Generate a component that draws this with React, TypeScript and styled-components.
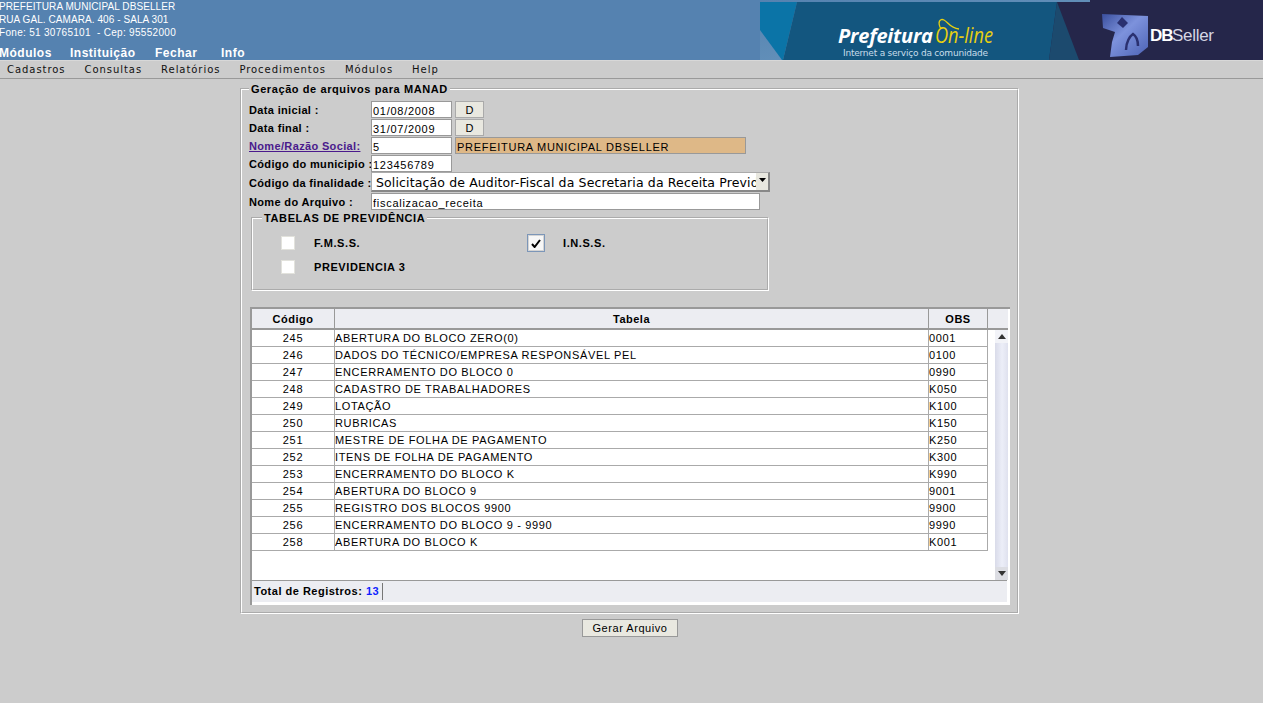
import React from "react";
import styled, { createGlobalStyle } from "styled-components";

const Global = createGlobalStyle`
  html, body { margin: 0; padding: 0; height: 100%; background: #cccccc; overflow: hidden; }
  body { font-family: "Liberation Sans", Arial, sans-serif; font-size: 11px; color: #000; }
  * { box-sizing: border-box; }
`;

const Page = styled.div`height: 703px; display: flex; flex-direction: column;`;
const Header = styled.header`
  height: 60px; background: #5582b0; display: flex; justify-content: space-between; overflow: hidden;
`;
const HeaderLeft = styled.div`
  display: flex; flex-direction: column; margin-left: -1px; color: #fff;
`;
const InfoLine = styled.div<{ $ls: number }>`
  height: 13px; line-height: 13px; font-size: 10px; letter-spacing: ${p => p.$ls}px; white-space: pre;
`;
const InfoBlock = styled.div`display: flex; flex-direction: column;`;
const TopNav = styled.nav`
  display: flex; margin-top: 8px; font-size: 12px; font-weight: bold; line-height: 13px; letter-spacing: 0.5px;
`;
const TopNavItem = styled.span<{ $w: number }>`width: ${p => p.$w}px;`;
const Banner = styled.svg`display: block; width: 503px; height: 60px; flex: none;`;

const Menu = styled.nav`
  height: 19px; background: #cccccc; border-bottom: 1px solid #999; border-top: 1px solid #d8d8d8; display: flex; padding-left: 7px;
  font-family: "DejaVu Sans", sans-serif; font-size: 10px; line-height: 17px; letter-spacing: 0.95px; color: #111;
`;
const MenuItem = styled.span`margin-right: 19px;`;

const Main = styled.main`
  display: flex; flex-direction: column; width: 779px; margin-left: 240px; padding-top: 4px;
`;
const Field = styled.fieldset`
  margin: 0; padding: 7px 7px 7px 7px; border: 2px groove #fff; min-width: 0; display: flex; flex-direction: column;
`;
const Legend = styled.legend`
  padding: 0 2px; height: 11px; line-height: 13px; font-weight: bold; font-size: 11px; letter-spacing: 0.59px;
`;
const FormGrid = styled.div`display: flex; flex-direction: column;`;
const FormRow = styled.div<{ $h: number }>`
  height: ${p => p.$h}px; display: flex; align-items: flex-start;
`;
const Label = styled.label`
  width: 122px; flex: none; font-weight: bold; font-size: 11px; line-height: 18px; letter-spacing: 0.35px; white-space: nowrap;
`;
const LinkLabel = styled(Label)`
  color: #4a1a8c; text-decoration: underline;
`;
const SelectLabel = styled(Label)`line-height: 22px;`;
const Input = styled.input<{ $w: number; $bg?: string }>`
  width: ${p => p.$w}px; height: 17px; padding: 2px 1px 0; border: 1px solid #999; background: ${p => p.$bg ?? "#fff"};
  font-family: "Liberation Sans", sans-serif; font-size: 11px; letter-spacing: 0.72px; color: #000; outline: none; border-radius: 0;
`;
const DateInput = styled(Input)`margin-right: 3px;`;
const SmallButton = styled.button`
  width: 29px; height: 17px; padding: 0; background: #e9e8e0; border: 1px solid #aaa; font-family: "Liberation Sans", sans-serif;
  font-size: 11px; color: #000; border-radius: 0;
`;
const SelectBox = styled.div`
  width: 399px; height: 20px; display: flex; background: #fff; border: 1px solid #aaa; border-right: 2px solid #888; border-bottom: 2px solid #888;
  overflow: hidden;
`;
const SelectText = styled.div`
  flex: 1; min-width: 0; overflow: hidden; white-space: nowrap; padding-left: 4px; line-height: 19px;
  font-family: "DejaVu Sans", sans-serif; font-size: 12.5px; letter-spacing: 0.13px;
`;
const SelectArrow = styled.div`
  width: 12px; flex: none; background: #e8e7df; display: flex; align-items: center; justify-content: center; padding-bottom: 3px;
`;
const InnerField = styled.fieldset`
  margin: 2px 0 0 2px; padding: 0; width: 518px; height: 79px; border: 2px groove #fff; min-width: 0;
`;
const InnerLegend = styled.legend`
  margin-left: 9px; padding: 0 2px; height: 11px; line-height: 13px; font-weight: bold; font-size: 11px; letter-spacing: 0.62px;
`;
const ChecksGrid = styled.div`
  display: grid; grid-template-columns: 249px 1fr; grid-auto-rows: 24px; padding: 8px 0 0 28px;
`;
const CheckCell = styled.div`display: flex; align-items: center;`;
const CheckSlot = styled.div`width: 33px; flex: none; display: flex; align-items: center;`;
const CheckBox = styled.span`
  width: 14px; height: 14px; display: block; background: #fff; border: 1px solid #e2e2dc;
`;
const CheckedBox = styled.span`
  width: 18px; height: 18px; display: flex; align-items: center; justify-content: center; margin-left: -3px; flex: none; background: #f7f7f7;
  border: 1px solid #7c96b8; box-shadow: inset 0 0 0 1px #d4d4d4;
`;
const CheckLabel = styled.span`font-weight: bold; font-size: 11px; letter-spacing: 0.58px;`;

const TableBox = styled.section`
  margin: 16px 0 0 1px; width: 760px; height: 298px; background: #fff; border-top: 2px solid #999; border-left: 2px solid #999;
  padding: 0 2px 3px 0; display: flex; flex-direction: column;
`;
const HeadRow = styled.div`
  height: 21px; flex: none; display: grid; grid-template-columns: 83px 594px 59px 1fr; background: #ecedf2; border-bottom: 2px solid #999;
`;
const HeadCell = styled.div`
  font-weight: bold; font-size: 11px; text-align: center; line-height: 20px; letter-spacing: 0.5px; border-right: 1px solid #999;
  &:last-child { border-right: 0; }
`;
const TableMiddle = styled.div`flex: 1; min-height: 0; display: flex; background: #fff;`;
const RowsArea = styled.div`width: 736px; flex: none; display: flex; flex-direction: column;`;
const DataRow = styled.div`
  height: 17px; flex: none; display: grid; grid-template-columns: 83px 594px 59px; border-bottom: 1px solid #aaa;
  font-size: 11px; line-height: 16px; letter-spacing: 0.65px;
`;
const CodeCell = styled.div`text-align: center; border-right: 1px solid #aaa;`;
const TextCell = styled.div`border-right: 1px solid #aaa; white-space: nowrap; overflow: hidden;`;
const Scrollbar = styled.div`
  width: 13px; margin-left: 7px; flex: none; display: flex; flex-direction: column; background: linear-gradient(90deg, #d9dbe9, #eceef8 55%, #dfe1ee);
`;
const ScrollButton = styled.div<{ $bg: string }>`
  height: 13px; flex: none; background: ${p => p.$bg}; display: flex; align-items: center; justify-content: center;
`;
const ScrollTrack = styled.div`flex: 1;`;
const TableFoot = styled.footer`
  height: 22px; flex: none; background: #ecedf2; border-top: 1px solid #999; margin-right: 1px; display: flex; align-items: center; padding-left: 2px;
  font-weight: bold; font-size: 11px; letter-spacing: 0.5px;
`;
const Total = styled.span`
  height: 17px; line-height: 17px; padding-right: 3px; border-right: 1px solid #777; white-space: pre;
`;
const Count = styled.span`color: #0f1eff;`;
const GenerateRow = styled.div`display: flex; justify-content: center; margin-top: 5px; padding-left: 1px;`;
const GenerateButton = styled.button`
  width: 96px; height: 18px; padding: 0; background: #e9e8e0; border: 1px solid #999; font-family: "Liberation Sans", sans-serif;
  font-size: 11px; letter-spacing: 0.55px; color: #000; border-radius: 0;
`;

const rows: [string, string, string][] = [
  ["245", "ABERTURA DO BLOCO ZERO(0)", "0001"],
  ["246", "DADOS DO TÉCNICO/EMPRESA RESPONSÁVEL PEL", "0100"],
  ["247", "ENCERRAMENTO DO BLOCO 0", "0990"],
  ["248", "CADASTRO DE TRABALHADORES", "K050"],
  ["249", "LOTAÇÃO", "K100"],
  ["250", "RUBRICAS", "K150"],
  ["251", "MESTRE DE FOLHA DE PAGAMENTO", "K250"],
  ["252", "ITENS DE FOLHA DE PAGAMENTO", "K300"],
  ["253", "ENCERRAMENTO DO BLOCO K", "K990"],
  ["254", "ABERTURA DO BLOCO 9", "9001"],
  ["255", "REGISTRO DOS BLOCOS 9900", "9900"],
  ["256", "ENCERRAMENTO DO BLOCO 9 - 9990", "9990"],
  ["258", "ABERTURA DO BLOCO K", "K001"],
];

const BannerArt = () => (
  <Banner viewBox="0 0 503 60">
    <defs>
      <linearGradient id="lg" x1="0" x2="1" y1="0" y2="1">
        <stop offset="0" stopColor="#3a4f9e" />
        <stop offset="0.45" stopColor="#7d92dc" />
        <stop offset="1" stopColor="#4c62b5" />
      </linearGradient>
      <linearGradient id="edge" x1="0" x2="1" y1="0" y2="1">
        <stop offset="0" stopColor="#5582b0" />
        <stop offset="1" stopColor="#6c9ac0" />
      </linearGradient>
    </defs>
    <rect x="0" y="0" width="330" height="60" fill="url(#edge)" />
    <rect x="280" y="2" width="223" height="58" fill="#25264a" />
    <rect x="330" y="0" width="173" height="2" fill="#25264a" />
    <polygon points="0,2 37,2 23,60 22,60 0,30" fill="#0b74a7" />
    <polygon points="37,2 297,2 289,60 23,60" fill="#13567f" />
    <polygon points="297,2 289,60 319,60" fill="#1c4a6e" />
    <text x="78" y="43" fontFamily="'Open Sans', 'Liberation Sans', sans-serif" fontSize="20" fontWeight="bold" fontStyle="italic" fill="#fff" textLength="95">Prefeitura</text>
    <text x="175" y="43" fontFamily="'Open Sans', 'Liberation Sans', sans-serif" fontSize="21" fontStyle="italic" fill="#e8cf10" textLength="58" lengthAdjust="spacingAndGlyphs">On-line</text>
    <path d="M181 29C177 22 180 18 184 20C188 22 190 28 199 29" fill="none" stroke="#e8cf10" strokeWidth="1.3" />
    <text x="83" y="56" fontFamily="'DejaVu Sans', sans-serif" fontSize="9" fill="#c8dcea" textLength="145">Internet a serviço da comunidade</text>
    <path d="M342 14L388 16L388 47L378 55L350 57L352 42L355 32L343 28Z" fill="url(#lg)" />
    <path d="M362 17L368 23L363 28L357 23Z" fill="#2a3070" />
    <path d="M366 50C366 42 370 36 373 34C376 36 378 40 378 46" fill="none" stroke="#2a3070" strokeWidth="2.5" />
    <text x="390" y="41" fontFamily="'Liberation Sans', sans-serif" fontSize="17" fontWeight="bold" fill="#fff" letterSpacing="-1">DB</text>
    <text x="412" y="41" fontFamily="'Liberation Sans', sans-serif" fontSize="17" fill="#d5d6e4" letterSpacing="-0.3">Seller</text>
  </Banner>
);

export default function App() {
  return (
    <Page>
      <Global />
      <Header>
        <HeaderLeft>
          <InfoBlock>
            <InfoLine $ls={0.08}>PREFEITURA MUNICIPAL DBSELLER</InfoLine>
            <InfoLine $ls={0.07}>RUA GAL. CAMARA. 406 - SALA 301</InfoLine>
            <InfoLine $ls={0.3}>Fone: 51 30765101  - Cep: 95552000</InfoLine>
          </InfoBlock>
          <TopNav>
            <TopNavItem $w={71}>Módulos</TopNavItem>
            <TopNavItem $w={85}>Instituição</TopNavItem>
            <TopNavItem $w={66}>Fechar</TopNavItem>
            <TopNavItem $w={40}>Info</TopNavItem>
          </TopNav>
        </HeaderLeft>
        <BannerArt />
      </Header>
      <Menu>
        {["Cadastros", "Consultas", "Relatórios", "Procedimentos", "Módulos", "Help"].map(m => (
          <MenuItem key={m}>{m}</MenuItem>
        ))}
      </Menu>
      <Main>
        <Field>
          <Legend>Geração de arquivos para MANAD</Legend>
          <FormGrid>
            <FormRow $h={18}>
              <Label>Data inicial :</Label>
              <DateInput $w={81} readOnly value="01/08/2008" />
              <SmallButton>D</SmallButton>
            </FormRow>
            <FormRow $h={18}>
              <Label>Data final :</Label>
              <DateInput $w={81} readOnly value="31/07/2009" />
              <SmallButton>D</SmallButton>
            </FormRow>
            <FormRow $h={18}>
              <LinkLabel>Nome/Razão Social:</LinkLabel>
              <DateInput $w={81} readOnly value="5" />
              <Input $w={291} $bg="#deb887" readOnly value="PREFEITURA MUNICIPAL DBSELLER" />
            </FormRow>
            <FormRow $h={17}>
              <Label>Código do municipio :</Label>
              <Input $w={81} readOnly value="123456789" />
            </FormRow>
            <FormRow $h={21}>
              <SelectLabel>Código da finalidade :</SelectLabel>
              <SelectBox>
                <SelectText>Solicitação de Auditor-Fiscal da Secretaria da Receita Previdenciária</SelectText>
                <SelectArrow>
                  <svg width="7" height="4" viewBox="0 0 7 4"><path d="M0 0h7L3.5 4z" fill="#000" /></svg>
                </SelectArrow>
              </SelectBox>
            </FormRow>
            <FormRow $h={17}>
              <Label>Nome do Arquivo :</Label>
              <Input $w={389} readOnly value="fiscalizacao_receita" />
            </FormRow>
          </FormGrid>
          <InnerField>
            <InnerLegend>TABELAS DE PREVIDÊNCIA</InnerLegend>
            <ChecksGrid>
              <CheckCell>
                <CheckSlot><CheckBox /></CheckSlot>
                <CheckLabel>F.M.S.S.</CheckLabel>
              </CheckCell>
              <CheckCell>
                <CheckSlot>
                  <CheckedBox>
                    <svg width="10" height="9" viewBox="0 0 10 9"><path d="M1 5l2.6 3L9 1" fill="none" stroke="#000" strokeWidth="2" /></svg>
                  </CheckedBox>
                </CheckSlot>
                <CheckLabel>I.N.S.S.</CheckLabel>
              </CheckCell>
              <CheckCell>
                <CheckSlot><CheckBox /></CheckSlot>
                <CheckLabel>PREVIDENCIA 3</CheckLabel>
              </CheckCell>
            </ChecksGrid>
          </InnerField>
          <TableBox>
            <HeadRow>
              <HeadCell>Código</HeadCell>
              <HeadCell>Tabela</HeadCell>
              <HeadCell>OBS</HeadCell>
              <HeadCell />
            </HeadRow>
            <TableMiddle>
              <RowsArea>
                {rows.map(r => (
                  <DataRow key={r[0]}>
                    <CodeCell>{r[0]}</CodeCell>
                    <TextCell>{r[1]}</TextCell>
                    <TextCell>{r[2]}</TextCell>
                  </DataRow>
                ))}
              </RowsArea>
              <Scrollbar>
                <ScrollButton $bg="#f2f3f8">
                  <svg width="8" height="5" viewBox="0 0 8 5"><path d="M0 5h8L4 0z" fill="#333" /></svg>
                </ScrollButton>
                <ScrollTrack />
                <ScrollButton $bg="#dcdde3">
                  <svg width="8" height="5" viewBox="0 0 8 5"><path d="M0 0h8L4 5z" fill="#333" /></svg>
                </ScrollButton>
              </Scrollbar>
            </TableMiddle>
            <TableFoot>
              <Total>Total de Registros: <Count>13</Count></Total>
            </TableFoot>
          </TableBox>
        </Field>
        <GenerateRow>
          <GenerateButton>Gerar Arquivo</GenerateButton>
        </GenerateRow>
      </Main>
    </Page>
  );
}
